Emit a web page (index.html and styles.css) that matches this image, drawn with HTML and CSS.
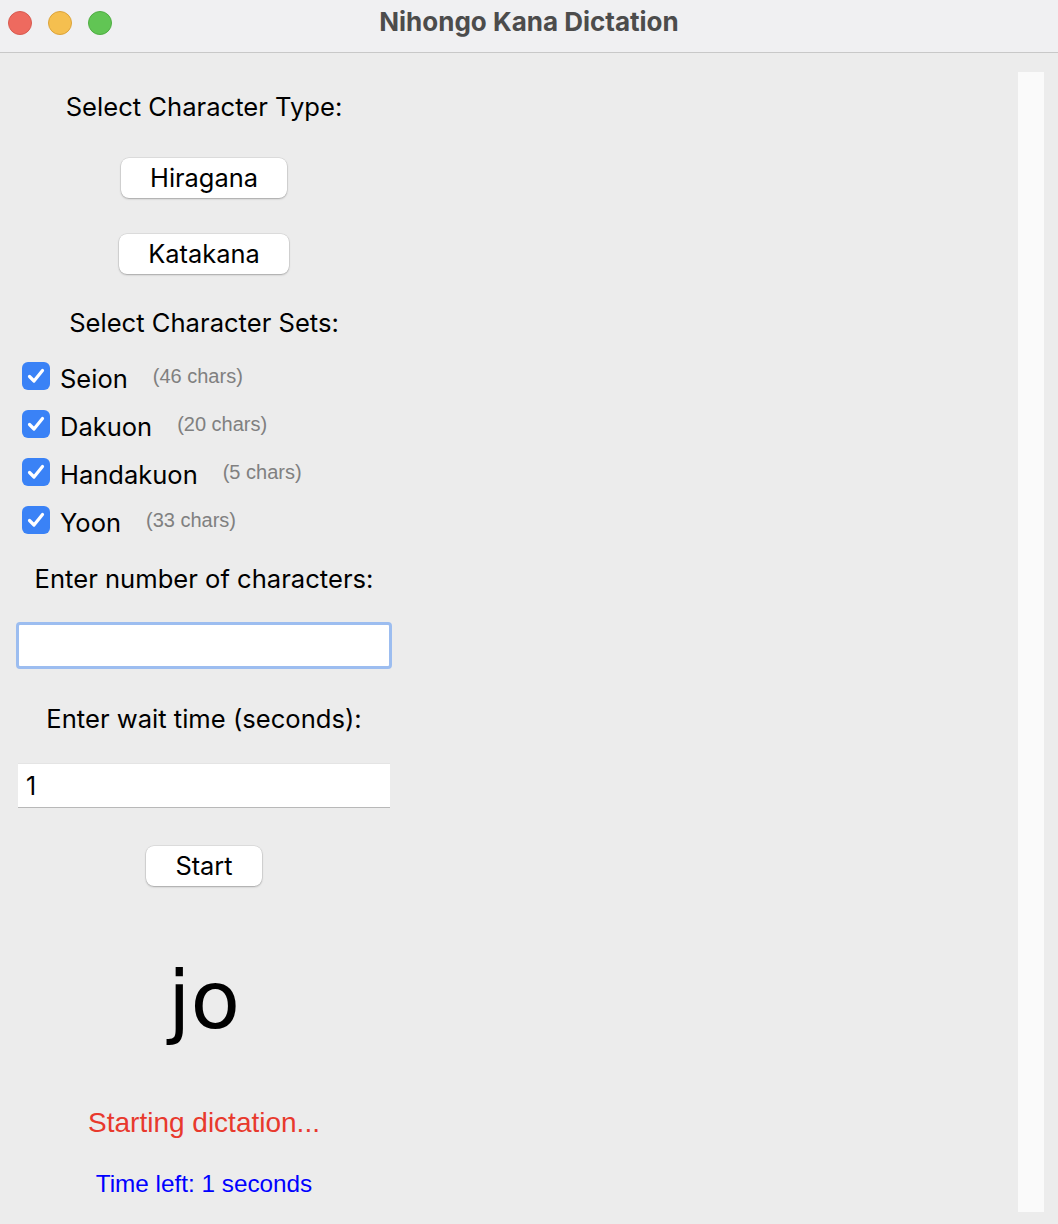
FILE: index.html
```html
<!DOCTYPE html>
<html>
<head>
<meta charset="utf-8">
<title>Nihongo Kana Dictation</title>
<link rel="stylesheet" href="styles.css">
</head>
<body>
<div class="window">
  <div class="titlebar">
    <div class="lights">
      <span class="light red"></span>
      <span class="light yellow"></span>
      <span class="light green"></span>
    </div>
    <div class="title">Nihongo Kana Dictation</div>
  </div>
  <div class="content">
    <div class="panel">
      <div class="label h-type">Select Character Type:</div>
      <div class="btn btn-hira">Hiragana</div>
      <div class="btn btn-kata">Katakana</div>
      <div class="label h-sets">Select Character Sets:</div>
      <div class="checks">
        <div class="check-row">
          <span class="box"><svg viewBox="0 0 28 28" width="28" height="28"><path d="M7.5 14.5 L12 19 L20.5 8.5" fill="none" stroke="#fff" stroke-width="3.2" stroke-linecap="round" stroke-linejoin="round"/></svg></span>
          <span class="check-name">Seion</span>
          <span class="count">(46 chars)</span>
        </div>
        <div class="check-row">
          <span class="box"><svg viewBox="0 0 28 28" width="28" height="28"><path d="M7.5 14.5 L12 19 L20.5 8.5" fill="none" stroke="#fff" stroke-width="3.2" stroke-linecap="round" stroke-linejoin="round"/></svg></span>
          <span class="check-name">Dakuon</span>
          <span class="count">(20 chars)</span>
        </div>
        <div class="check-row">
          <span class="box"><svg viewBox="0 0 28 28" width="28" height="28"><path d="M7.5 14.5 L12 19 L20.5 8.5" fill="none" stroke="#fff" stroke-width="3.2" stroke-linecap="round" stroke-linejoin="round"/></svg></span>
          <span class="check-name">Handakuon</span>
          <span class="count">(5 chars)</span>
        </div>
        <div class="check-row">
          <span class="box"><svg viewBox="0 0 28 28" width="28" height="28"><path d="M7.5 14.5 L12 19 L20.5 8.5" fill="none" stroke="#fff" stroke-width="3.2" stroke-linecap="round" stroke-linejoin="round"/></svg></span>
          <span class="check-name">Yoon</span>
          <span class="count">(33 chars)</span>
        </div>
      </div>
      <div class="label h-num">Enter number of characters:</div>
      <div class="entry entry-focus"></div>
      <div class="label h-wait">Enter wait time (seconds):</div>
      <div class="entry entry-plain">1</div>
      <div class="btn btn-start">Start</div>
      <div class="kana">jo</div>
      <div class="status">Starting dictation...</div>
      <div class="timer">Time left: 1 seconds</div>
    </div>
    <div class="scrolltrack"></div>
  </div>
</div>
</body>
</html>
```

FILE: styles.css
```css
html, body {
  margin: 0;
  padding: 0;
  background: #ececec;
}
body {
  font-family: "Inter", "Noto Sans", sans-serif;
  color: #000;
}
.window {
  width: 1058px;
  height: 1224px;
  display: flex;
  flex-direction: column;
  overflow: hidden;
}
.titlebar {
  height: 52px;
  flex: none;
  background: #f0f0f2;
  border-bottom: 1px solid #c8c8c8;
  display: flex;
  align-items: flex-start;
  position: relative;
}
.lights {
  display: flex;
  gap: 16px;
  padding-left: 8px;
  padding-top: 11px;
}
.light {
  width: 24px;
  height: 24px;
  border-radius: 50%;
  box-sizing: border-box;
}
.light.red { background: #ee6a5f; border: 1px solid #d85a50; }
.light.yellow { background: #f5bf4f; border: 1px solid #dca33a; }
.light.green { background: #61c554; border: 1px solid #4fad43; }
.title {
  position: absolute;
  left: 0;
  right: 0;
  top: 6px;
  height: 32px;
  line-height: 32px;
  text-align: center;
  font-weight: 700;
  font-size: 26px;
  color: #4c4c4c;
  pointer-events: none;
}
.content {
  flex: 1;
  display: flex;
  justify-content: space-between;
}
.panel {
  margin-left: 18px;
  width: 372px;
  display: flex;
  flex-direction: column;
  align-items: center;
}
.label {
  height: 28px;
  line-height: 28px;
  font-size: 25.6px;
  white-space: nowrap;
}
.h-type { margin-top: 40px; }
.btn {
  height: 40px;
  line-height: 40px;
  background: #fff;
  border-radius: 8px;
  box-shadow: 0 0 0 0.5px rgba(0,0,0,0.12), 0 1px 2px rgba(0,0,0,0.25);
  font-size: 25.4px;
  text-align: center;
  box-sizing: border-box;
}
.btn-hira { width: 166px; margin-top: 37px; }
.btn-kata { width: 170px; margin-top: 36px; }
.h-sets { margin-top: 35px; }
.checks {
  align-self: stretch;
  margin-top: 15px;
  display: flex;
  flex-direction: column;
}
.check-row {
  height: 48px;
  display: flex;
  align-items: center;
  padding-left: 4px;
}
.box {
  width: 28px;
  height: 28px;
  border-radius: 6px;
  background: #3a82f6;
  display: flex;
  flex: none;
}
.check-name {
  font-size: 25.5px;
  margin-left: 10px;
  margin-top: 4px;
}
.count {
  font-size: 20px;
  color: #808080;
  margin-left: 25px;
  font-family: "Liberation Sans", Arial, sans-serif;
}
.h-num { margin-top: 21px; }
.entry {
  background: #fff;
  box-sizing: border-box;
  align-self: stretch;
  font-size: 25px;
}
.entry-focus {
  height: 47px;
  margin: 29px -2px 0;
  border: 3px solid #9cbdf0;
  border-radius: 4px;
}
.h-wait { margin-top: 36px; }
.entry-plain {
  height: 45px;
  margin-top: 30px;
  border-top: 1px solid #e4e4e4;
  border-bottom: 1px solid #b8b8b8;
  line-height: 45px;
  padding-left: 8px;
}
.btn-start { width: 116px; margin-top: 38px; }
.kana {
  margin-top: 59px;
  height: 110px;
  line-height: 110px;
  font-size: 81px;
  font-family: "DejaVu Sans", sans-serif;
}
.status {
  margin-top: 54px;
  height: 28px;
  line-height: 28px;
  font-size: 28px;
  color: #e8392d;
  font-family: "Liberation Sans", Arial, sans-serif;
}
.timer {
  margin-top: 33px;
  height: 28px;
  line-height: 28px;
  font-size: 24.3px;
  color: #0000ff;
  font-family: "Liberation Sans", Arial, sans-serif;
}
.scrolltrack {
  width: 26px;
  height: 1140px;
  margin-top: 19px;
  margin-right: 14px;
  background: #fafafa;
}
```
